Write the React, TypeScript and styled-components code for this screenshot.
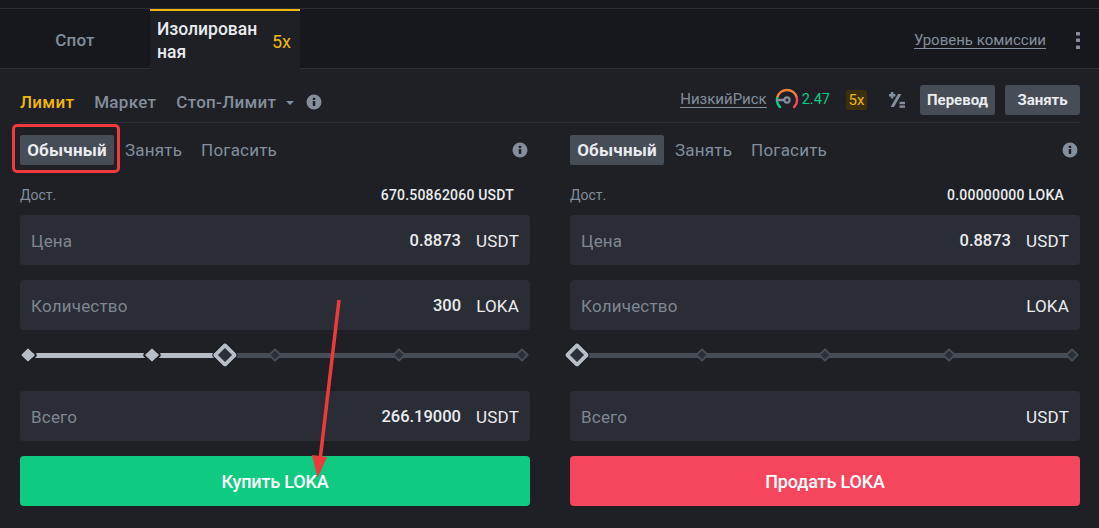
import React from "react";
import styled, { createGlobalStyle } from "styled-components";

const GlobalStyle = createGlobalStyle`
  html, body { margin: 0; padding: 0; background: #1e2026; }
  body { font-family: Roboto, "Noto Sans", sans-serif; }
`;

const Page = styled.div`
  position: relative;
  width: 1099px;
  height: 528px;
  overflow: hidden;
  background: #1e2026;
`;

const TopStrip = styled.div`
  height: 8px;
  background: #16181d;
  border-bottom: 1px solid #2b2f36;
`;

const TabBar = styled.div`
  display: flex;
  align-items: stretch;
  height: 59px;
  background: #16181d;
  border-bottom: 1px solid #2b2f36;
`;

const Tab = styled.div`
  width: 150px;
  padding-top: 3px;
  box-sizing: border-box;
  display: flex;
  align-items: center;
  justify-content: center;
  font-size: 17px;
  font-weight: 500;
  letter-spacing: 0.2px;
  color: #848e9c;
`;

const ActiveTab = styled.div`
  width: 150px;
  height: 60px;
  box-sizing: border-box;
  border-top: 2px solid #f0b90b;
  padding: 2px 9px 0 7px;
  background: #1e2026;
  display: flex;
  align-items: center;
  justify-content: space-between;
  font-size: 17.5px;
  font-weight: 500;
  line-height: 23px;
  color: #eaecef;
`;

const TabLabel = styled.span`
  width: 106px;
  word-break: break-all;
`;

const Leverage = styled.span`
  font-size: 18px;
  font-weight: 400;
  color: #f0b90b;
`;

const TabRight = styled.div`
  margin-left: auto;
  padding: 3px 19px 0 0;
  display: flex;
  align-items: center;
  gap: 30px;
`;

const FeeLink = styled.span`
  font-size: 15px;
  line-height: 16px;
  color: #848e9c;
  border-bottom: 1px solid #848e9c;
`;

const OrderBar = styled.div`
  display: flex;
  align-items: center;
  height: 54px;
  padding-top: 8px;
  margin: 0 19px 0 20px;
  border-bottom: 1px solid #2b2f36;
  box-sizing: border-box;
`;

const OrderLeft = styled.div`
  display: flex;
  align-items: center;
  margin-top: 4px;
`;

const OrderType = styled.span<{ $active?: boolean }>`
  font-size: 17px;
  font-weight: 500;
  letter-spacing: 0.3px;
  color: ${(p) => (p.$active ? "#f0b90b" : "#848e9c")};
  margin-right: 20px;
`;

const Caret = styled.span`
  width: 0;
  height: 0;
  margin: 2px 12px 0 -10px;
  border-left: 4px solid transparent;
  border-right: 4px solid transparent;
  border-top: 4px solid #848e9c;
`;

const OrderRight = styled.div`
  margin-left: auto;
  display: flex;
  align-items: center;
`;

const RiskLink = styled.span`
  font-size: 15px;
  line-height: 16px;
  color: #848e9c;
  border-bottom: 1px solid #848e9c;
  margin-right: 8px;
`;

const RiskValue = styled.span`
  font-size: 14.5px;
  color: #0ecb81;
  margin: 0 16px 0 3px;
`;

const LeverageChip = styled.span`
  width: 21px;
  height: 20px;
  border-radius: 2px;
  background: #3c2f0d;
  color: #f0b90b;
  font-size: 15px;
  display: flex;
  align-items: center;
  justify-content: center;
  margin-right: 21px;
`;

const PercentSvg = styled.svg`
  margin-right: 4px;
`;

const SmallButton = styled.div`
  width: 75px;
  height: 30px;
  border-radius: 3px;
  background: #474d57;
  color: #eaecef;
  font-size: 15px;
  font-weight: 700;
  display: flex;
  align-items: center;
  justify-content: center;
  margin-left: 10px;
`;

const Columns = styled.div`
  display: grid;
  grid-template-columns: 510px 510px;
  column-gap: 40px;
  padding: 0 19px 0 20px;
`;

const Side = styled.div`
  display: flex;
  flex-direction: column;
`;

const ModeRow = styled.div`
  display: flex;
  align-items: center;
  height: 30px;
  margin-top: 12px;
`;

const ModeActive = styled.span`
  width: 94px;
  height: 30px;
  border-radius: 2px;
  background: #474d57;
  color: #eaecef;
  font-size: 17px;
  font-weight: 700;
  letter-spacing: 0.2px;
  line-height: 31px;
  text-align: center;
  margin-right: 11px;
`;

const ModeTab = styled.span`
  font-size: 17px;
  letter-spacing: 0.2px;
  line-height: 31px;
  color: #848e9c;
  margin-right: 19px;
`;

const InfoWrap = styled.span`
  margin-left: auto;
  margin-right: 2px;
  display: flex;
`;

const Balance = styled.div`
  display: flex;
  justify-content: space-between;
  align-items: center;
  height: 20px;
  margin-top: 20px;
  padding-right: 16px;
  font-size: 14px;
  color: #848e9c;
`;

const BalanceValue = styled.span`
  color: #eaecef;
  font-weight: 500;
  letter-spacing: 0.2px;
`;

const Field = styled.div<{ $top: number }>`
  height: 50px;
  margin-top: ${(p) => p.$top}px;
  padding: 1px 11px 0;
  border-radius: 4px;
  background: #2a2d36;
  display: flex;
  align-items: center;
  font-size: 17px;
  letter-spacing: 0.2px;
  box-sizing: border-box;
`;

const FieldLabel = styled.span`
  color: #7f8792;
  margin-right: auto;
`;

const FieldValue = styled.span`
  color: #eaecef;
  font-size: 16.5px;
  font-weight: 500;
  letter-spacing: 0;
  margin-right: 15px;
`;

const FieldUnit = styled.span`
  color: #eaecef;
`;

const SliderWrap = styled.div`
  position: relative;
  height: 20px;
  margin-top: 15px;
  margin-bottom: 26px;
  display: flex;
  align-items: center;
  justify-content: space-between;
  padding: 0 3px;
`;

const Track = styled.div`
  position: absolute;
  left: 8px;
  right: 8px;
  top: 8px;
  height: 5px;
  background: #474d57;
`;

const TrackFill = styled.div`
  height: 100%;
  background: #b7bdc6;
`;

const Dot = styled.span<{ $on?: boolean }>`
  position: relative;
  width: 10px;
  height: 10px;
  box-sizing: border-box;
  transform: rotate(45deg);
  border-radius: 1px;
  border: 2px solid ${(p) => (p.$on ? "#b7bdc6" : "#474d57")};
  background: ${(p) => (p.$on ? "#b7bdc6" : "#2b2f36")};
  outline: ${(p) => (p.$on ? "2px solid #1e2026" : "none")};
`;

const Thumb = styled.span<{ $left: number }>`
  position: absolute;
  left: ${(p) => p.$left}px;
  top: 1px;
  width: 18px;
  height: 18px;
  box-sizing: border-box;
  transform: rotate(45deg);
  border-radius: 3px;
  border: 4px solid #b7bdc6;
  background: #2b2f36;
  outline: 1px solid #1e2026;
`;

const ActionButton = styled.div<{ $color: string }>`
  height: 50px;
  margin-top: 15px;
  border-radius: 4px;
  background: ${(p) => p.$color};
  color: #fff;
  font-size: 18px;
  letter-spacing: -0.15px;
  font-weight: 500;
  display: flex;
  align-items: center;
  justify-content: center;
`;

const Highlight = styled.div`
  position: absolute;
  left: 12px;
  top: 124px;
  width: 108px;
  height: 49px;
  box-sizing: border-box;
  border: 3px solid #f03a3e;
  border-radius: 5px;
`;

const ArrowSvg = styled.svg`
  position: absolute;
  left: 300px;
  top: 290px;
`;

const InfoIcon = () => (
  <svg width="16" height="16" viewBox="0 0 16 16">
    <circle cx="8" cy="8" r="7.5" fill="#848e9c" />
    <rect x="6.8" y="7" width="2.4" height="5" fill="#1e2026" />
    <rect x="6.8" y="3.8" width="2.4" height="2.2" fill="#1e2026" />
  </svg>
);

const Gauge = () => (
  <svg width="24" height="24" viewBox="0 0 24 24" fill="none">
    <path d="M4.93 19.07 A10 10 0 0 1 2.34 9.4" stroke="#0ecb81" strokeWidth="2.4" strokeLinecap="round" />
    <path d="M2.34 9.4 A10 10 0 0 1 21.66 9.4" stroke="#f0803c" strokeWidth="2.4" />
    <path d="M21.66 9.4 A10 10 0 0 1 19.07 19.07" stroke="#f6465d" strokeWidth="2.4" strokeLinecap="round" />
    <circle cx="12" cy="12" r="2.6" stroke="#848e9c" strokeWidth="2.2" />
    <path d="M1 12 H9" stroke="#848e9c" strokeWidth="2.4" />
  </svg>
);

const PercentIcon = () => (
  <PercentSvg width="18" height="18" viewBox="0 0 18 18" fill="#848e9c">
    <path d="M2.8 1 H5.4 V3 H7.4 V5.4 H5.4 V7.4 H2.8 V5.4 H1 V3 H2.8 Z" />
    <path d="M10 3 L13.4 3 L6 16 L2.6 16 Z" />
    <rect x="11.5" y="10.8" width="5.5" height="2.4" />
    <rect x="11.5" y="14.4" width="5.5" height="2.4" />
  </PercentSvg>
);

const DotsIcon = () => (
  <svg width="4" height="17" viewBox="0 0 4 17" fill="#848e9c">
    <rect x="0" y="0" width="4" height="3.5" rx="0.5" />
    <rect x="0" y="6.5" width="4" height="3.5" rx="0.5" />
    <rect x="0" y="13.5" width="4" height="3.5" rx="0.5" />
  </svg>
);

const Slider = ({ fill, thumb, active }: { fill: number; thumb: number; active: number }) => (
  <SliderWrap>
    <Track>
      <TrackFill style={{ width: fill }} />
    </Track>
    {[0, 1, 2, 3, 4].map((i) => (
      <Dot key={i} $on={i < active} />
    ))}
    <Thumb $left={thumb} />
  </SliderWrap>
);

type SideProps = {
  available: string;
  price: string;
  base: string;
  amount?: string;
  total?: string;
  fill: number;
  thumb: number;
  active: number;
  action: string;
  color: string;
};

const TradeSide = (props: SideProps) => (
  <Side>
    <ModeRow>
      <ModeActive>Обычный</ModeActive>
      <ModeTab>Занять</ModeTab>
      <ModeTab>Погасить</ModeTab>
      <InfoWrap>
        <InfoIcon />
      </InfoWrap>
    </ModeRow>
    <Balance>
      <span>Дост.</span>
      <BalanceValue>{props.available}</BalanceValue>
    </Balance>
    <Field $top={10}>
      <FieldLabel>Цена</FieldLabel>
      <FieldValue>{props.price}</FieldValue>
      <FieldUnit>USDT</FieldUnit>
    </Field>
    <Field $top={15}>
      <FieldLabel>Количество</FieldLabel>
      {props.amount && <FieldValue>{props.amount}</FieldValue>}
      <FieldUnit>{props.base}</FieldUnit>
    </Field>
    <Slider fill={props.fill} thumb={props.thumb} active={props.active} />
    <Field $top={0}>
      <FieldLabel>Всего</FieldLabel>
      {props.total && <FieldValue>{props.total}</FieldValue>}
      <FieldUnit>USDT</FieldUnit>
    </Field>
    <ActionButton $color={props.color}>{props.action}</ActionButton>
  </Side>
);

export default function App() {
  return (
    <Page>
      <GlobalStyle />
      <TopStrip />
      <TabBar>
        <Tab>Спот</Tab>
        <ActiveTab>
          <TabLabel>Изолированная</TabLabel>
          <Leverage>5x</Leverage>
        </ActiveTab>
        <TabRight>
          <FeeLink>Уровень комиссии</FeeLink>
          <DotsIcon />
        </TabRight>
      </TabBar>
      <OrderBar>
        <OrderLeft>
          <OrderType $active>Лимит</OrderType>
          <OrderType>Маркет</OrderType>
          <OrderType>Стоп-Лимит</OrderType>
          <Caret />
          <InfoIcon />
        </OrderLeft>
        <OrderRight>
          <RiskLink>НизкийРиск</RiskLink>
          <Gauge />
          <RiskValue>2.47</RiskValue>
          <LeverageChip>5x</LeverageChip>
          <PercentIcon />
          <SmallButton>Перевод</SmallButton>
          <SmallButton>Занять</SmallButton>
        </OrderRight>
      </OrderBar>
      <Columns>
        <TradeSide
          available="670.50862060 USDT"
          price="0.8873"
          base="LOKA"
          amount="300"
          total="266.19000"
          fill={197}
          thumb={196}
          active={2}
          action="Купить LOKA"
          color="#0ecb81"
        />
        <TradeSide
          available="0.00000000 LOKA"
          price="0.8873"
          base="LOKA"
          fill={0}
          thumb={-2}
          active={0}
          action="Продать LOKA"
          color="#f6465d"
        />
      </Columns>
      <Highlight />
      <ArrowSvg width="50" height="200" viewBox="0 0 50 200">
        <path d="M39 10 L20 170" stroke="#ee3a3a" strokeWidth="3.5" />
        <path d="M12 165 L27 167 L17.5 188 Z" fill="#ee3a3a" />
      </ArrowSvg>
    </Page>
  );
}
